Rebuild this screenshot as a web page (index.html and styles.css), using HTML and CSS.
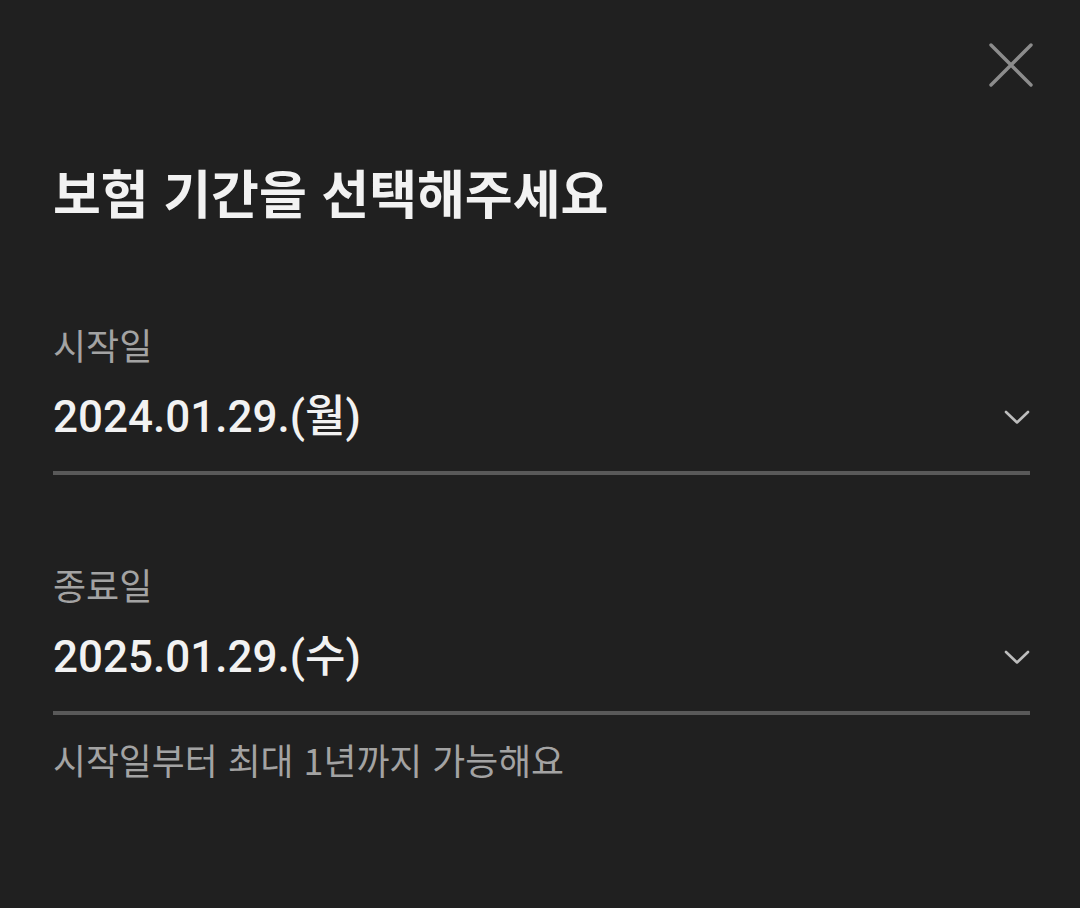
FILE: index.html
```html
<!DOCTYPE html>
<html lang="ko">
<head>
<meta charset="utf-8">
<link rel="stylesheet" href="styles.css">
</head>
<body>
<div class="sheet">
  <div class="top">
    <button class="close" aria-label="닫기">
      <svg width="46" height="46" viewBox="0 0 46 46"><path d="M3 3 L43 43 M43 3 L3 43" stroke="#8c8c8c" stroke-width="3.4" stroke-linecap="round" fill="none"/></svg>
    </button>
  </div>
  <h1 class="title">보험 기간을 선택해주세요</h1>
  <div class="field field-start">
    <div class="label">시작일</div>
    <div class="value-row">
      <span class="value">2024.01.29.(월)</span>
      <svg class="chev" width="26" height="15" viewBox="0 0 26 15"><path d="M2 2 L13 12.5 L24 2" stroke="#bdbdbd" stroke-width="2.6" stroke-linecap="round" stroke-linejoin="round" fill="none"/></svg>
    </div>
  </div>
  <div class="field field-end">
    <div class="label">종료일</div>
    <div class="value-row">
      <span class="value">2025.01.29.(수)</span>
      <svg class="chev" width="26" height="15" viewBox="0 0 26 15"><path d="M2 2 L13 12.5 L24 2" stroke="#bdbdbd" stroke-width="2.6" stroke-linecap="round" stroke-linejoin="round" fill="none"/></svg>
    </div>
  </div>
  <p class="help">시작일부터 최대 1년까지 가능해요</p>
</div>
</body>
</html>
```

FILE: styles.css
```css
html, body {
  margin: 0;
  padding: 0;
  background: #202020;
}
body {
  width: 1080px;
  height: 908px;
  overflow: hidden;
  font-family: Roboto, "Noto Sans CJK KR", sans-serif;
}
.sheet {
  padding: 0 50px 0 53px;
}
.top {
  display: flex;
  justify-content: flex-end;
  padding-top: 42px;
  margin-right: -4px;
}
.close {
  background: none;
  border: 0;
  padding: 0;
  width: 46px;
  height: 46px;
  display: block;
}
.close svg { display: block; }
.title {
  margin: 72px 0 0;
  font-family: "Noto Sans CJK KR", sans-serif;
  font-weight: 700;
  font-size: 52px;
  line-height: 64px;
  color: #f2f2f2;
  letter-spacing: 0;
}
.field {
  border-bottom: 4px solid #595959;
}
.field-start { margin-top: 97px; }
.field-end { margin-top: 86px; }
.label {
  font-family: "Noto Sans CJK KR", sans-serif;
  font-size: 36px;
  line-height: 46px;
  color: #a3a3a3;
}
.value-row {
  display: flex;
  align-items: center;
  justify-content: space-between;
  margin-top: 22px;
  padding-bottom: 26px;
}
.value {
  font-size: 44px;
  line-height: 56px;
  font-weight: 500;
  color: #f2f2f2;
}
.chev {
  display: block;
}
.help {
  margin: 21px 0 0;
  font-family: "Noto Sans CJK KR", sans-serif;
  font-size: 35.8px;
  line-height: 46px;
  color: #a3a3a3;
}
```
